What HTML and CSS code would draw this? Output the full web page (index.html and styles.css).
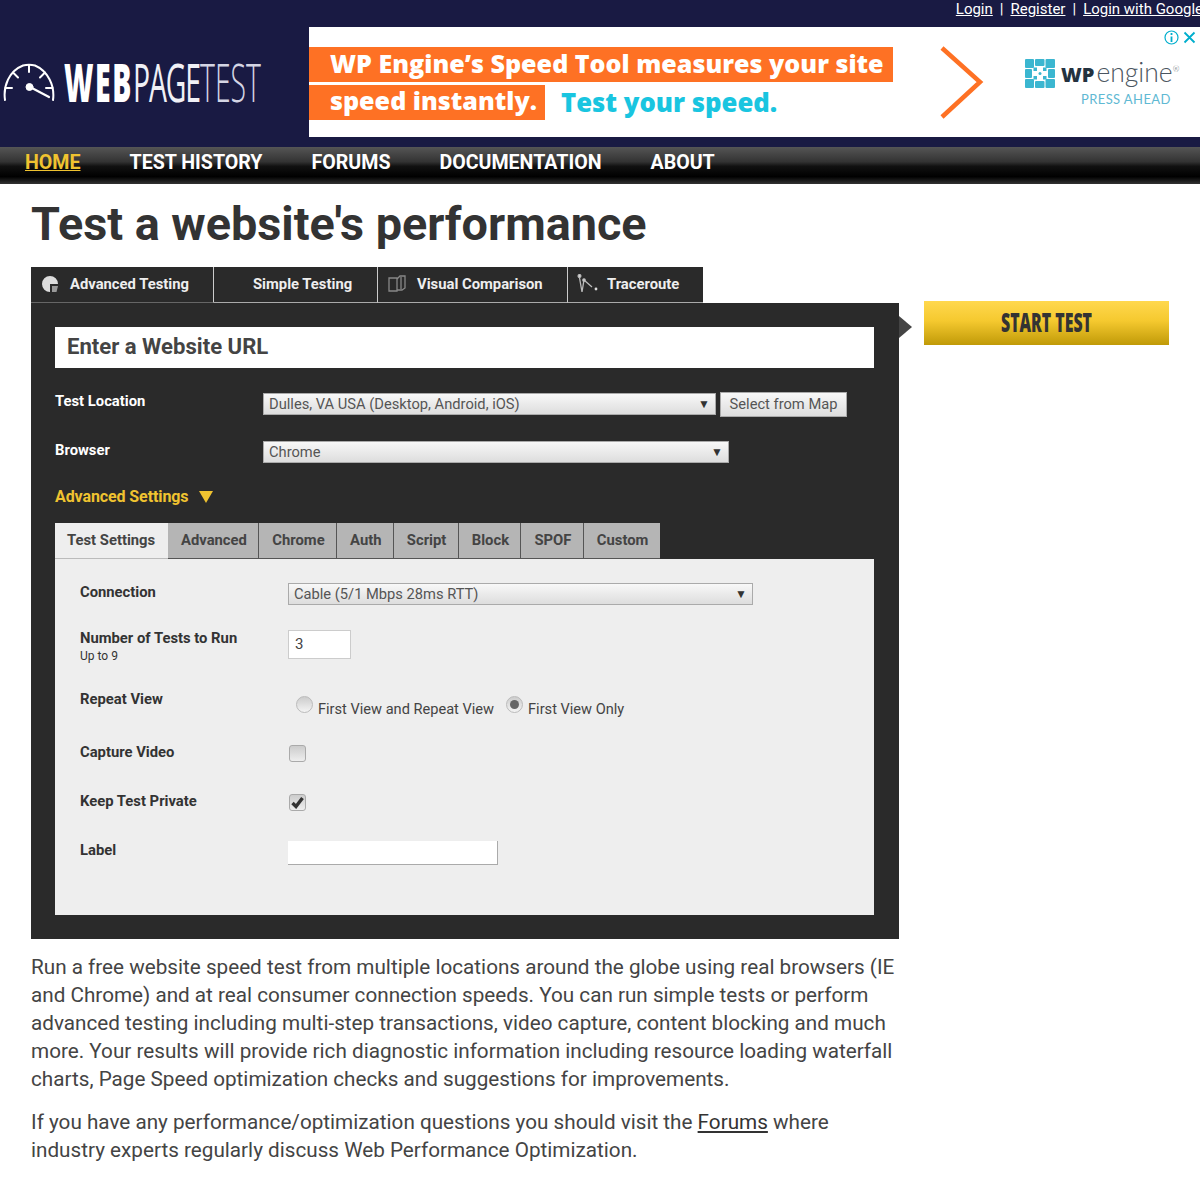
FILE: index.html
```html
<!DOCTYPE html>
<html lang="en">
  <head>
    <meta charset="UTF-8" />
    <title>WebPageTest - Website Performance and Optimization Test</title>
    <link rel="stylesheet" href="styles.css">
  </head>
  <body>
    <header class="header">
      <div class="user-links">
        <a href="#">Login</a><span>|</span><a href="#">Register</a><span>|</span><a href="#">Login with Google</a>
      </div>
      <div class="banner">
        <div class="logo">
          <svg class="gauge" width="52" height="40" viewBox="0 0 52 40" fill="none" stroke="#fff" stroke-width="2" stroke-linecap="round">
            <path d="M2 38 C0 24 6 9 20 3.500 C23.500 2.600 28.500 2.600 32 3.500 C45 9 52 24 50 38" />
            <path d="M26 3 V10 M10 10.500 L15 15.500 M42 10.500 L37 15.500 M2.500 26 H9 M49.500 26 H43" />
            <circle cx="26.500" cy="25" r="3.500" fill="#fff" stroke-width="1" />
            <path d="M27 25 L46 35" stroke-width="2.200" />
          </svg>
          <div class="logo-text"><b>WEB</b><span>PAGE</span><i>TEST</i></div>
        </div>
        <div class="ad">
          <div class="ad-copy">
            <div class="ad-line ad-line-first">WP Engine’s Speed Tool measures your site</div>
            <div class="ad-second">
              <div class="ad-line">speed instantly.</div>
              <div class="ad-cta">Test your speed.</div>
            </div>
          </div>
          <svg class="ad-arrow" width="44" height="74" viewBox="0 0 44 74" fill="none">
            <path d="M2 2 L40 36 L2 71" stroke="#fe7124" stroke-width="4.500" />
          </svg>
          <div class="ad-brand">
            <div class="ad-brand-top">
              <svg width="30" height="29" viewBox="0 0 30 29" fill="#3bb6d0">
                <rect x="0" y="0" width="9" height="9" rx="1" />
                <rect x="10" y="0" width="9.500" height="7" rx="1" />
                <rect x="20.500" y="0" width="9.500" height="9" rx="1" />
                <rect x="0" y="10" width="7" height="9" rx="1" />
                <rect x="23" y="10" width="7" height="9" rx="1" />
                <rect x="0" y="20" width="9" height="9" rx="1" />
                <rect x="10" y="22" width="9.500" height="7" rx="1" />
                <rect x="20.500" y="20" width="9.500" height="9" rx="1" />
                <rect x="8.500" y="8.500" width="3.500" height="3.500" />
                <rect x="18" y="8.500" width="3.500" height="3.500" />
                <rect x="8.500" y="17" width="3.500" height="3.500" />
                <rect x="18" y="17" width="3.500" height="3.500" />
                <circle cx="15" cy="14.500" r="1.500" />
              </svg>
              <div class="ad-brand-name"><b>WP</b>engine<sup>®</sup></div>
            </div>
            <div class="ad-tagline">PRESS AHEAD</div>
          </div>
          <div class="ad-choices">
            <svg width="15" height="15" viewBox="0 0 15 15" fill="none" stroke="#00aecd">
              <circle cx="7.500" cy="7.500" r="6.500" stroke-width="1.200" />
              <path d="M7.500 6.500 V12 M7.500 3 V5" stroke-width="1.800" />
            </svg>
            <svg width="13" height="13" viewBox="0 0 13 13" fill="none" stroke="#00aecd" stroke-width="1.800">
              <path d="M1.500 1.500 L11.500 11.500 M11.500 1.500 L1.500 11.500" />
            </svg>
          </div>
        </div>
      </div>
    </header>

    <nav class="nav">
      <a href="#" class="current">HOME</a>
      <a href="#">TEST HISTORY</a>
      <a href="#">FORUMS</a>
      <a href="#">DOCUMENTATION</a>
      <a href="#">ABOUT</a>
    </nav>

    <main class="main">
      <h1>Test a website's performance</h1>

      <div class="test-area">
        <div class="test-box">
          <ul class="test-tabs">
            <li class="active tab-advanced">
              <svg width="18" height="18" viewBox="0 0 18 18">
                <path d="M9 1 A8 8 0 1 0 9 17 V9 H17 A8 8 0 0 0 9 1 Z" fill="#ddd" />
                <path d="M11 11 H17 L15.500 17 H11 Z" fill="#999" />
              </svg>
              Advanced Testing
            </li>
            <li class="tab-simple">Simple Testing</li>
            <li class="tab-visual">
              <svg width="18" height="17" viewBox="0 0 18 17" fill="none" stroke="#888" stroke-width="1.300">
                <path d="M1 3 H9 V16 H1 Z" />
                <path d="M9 4 L12 1 H17 V13 L14 15 H9" />
                <path d="M13 2 V14" />
              </svg>
              Visual Comparison
            </li>
            <li class="tab-trace">
              <svg width="21" height="19" viewBox="0 0 21 19" fill="none" stroke="#bbb" stroke-width="1.300">
                <path d="M2 1 L5 18 L7 6 L15 13" />
                <circle cx="2.500" cy="2" r="1.400" fill="#ddd" />
                <circle cx="7" cy="6" r="1.200" fill="#ddd" />
                <circle cx="19" cy="15" r="1.400" fill="#ddd" stroke="none" />
              </svg>
              Traceroute
            </li>
          </ul>

          <div class="test-panel">
            <div class="url-box">Enter a Website URL</div>

            <div class="form-row">
              <label>Test Location</label>
              <div class="select select-location">Dulles, VA USA (Desktop, Android, iOS)<span>▼</span></div>
              <div class="map-btn">Select from Map</div>
            </div>
            <div class="form-row">
              <label>Browser</label>
              <div class="select select-browser">Chrome<span>▼</span></div>
            </div>

            <div class="adv-toggle">Advanced Settings<span></span></div>

            <ul class="sub-tabs">
              <li class="active">Test Settings</li>
              <li>Advanced</li>
              <li>Chrome</li>
              <li>Auth</li>
              <li>Script</li>
              <li>Block</li>
              <li>SPOF</li>
              <li>Custom</li>
            </ul>

            <div class="settings">
              <div class="set-row row-connection">
                <label>Connection</label>
                <div class="select select-connection">Cable (5/1 Mbps 28ms RTT)<span>▼</span></div>
              </div>
              <div class="set-row row-number">
                <label>Number of Tests to Run<small>Up to 9</small></label>
                <div class="text-input num-input">3</div>
              </div>
              <div class="set-row row-repeat">
                <label>Repeat View</label>
                <div class="radios">
                  <span class="radio"></span><span class="radio-text">First View and Repeat View</span>
                  <span class="radio checked"></span><span class="radio-text">First View Only</span>
                </div>
              </div>
              <div class="set-row row-video">
                <label>Capture Video</label>
                <span class="check"></span>
              </div>
              <div class="set-row row-private">
                <label>Keep Test Private</label>
                <span class="check">
                  <svg width="13" height="13" viewBox="0 0 13 13"><path d="M1.500 7 L5 10.500 L11.500 2" fill="none" stroke="#333" stroke-width="3.400" /></svg>
                </span>
              </div>
              <div class="set-row">
                <label>Label</label>
                <div class="text-input label-input"></div>
              </div>
            </div>
          </div>
        </div>

        <div class="start">
          <div class="start-arrow"></div>
          <div class="start-btn"><span>START TEST</span></div>
        </div>
      </div>

      <div class="about">
        <p>Run a free website speed test from multiple locations around the globe using real browsers (IE and Chrome) and at real consumer connection speeds. You can run simple tests or perform advanced testing including multi-step transactions, video capture, content blocking and much more. Your results will provide rich diagnostic information including resource loading waterfall charts, Page Speed optimization checks and suggestions for improvements.</p>
        <p>If you have any performance/optimization questions you should visit the <a href="#">Forums</a> where industry experts regularly discuss Web Performance Optimization.</p>
      </div>
    </main>
  </body>
</html>
```

FILE: styles.css
```css
* {
  margin: 0;
  padding: 0;
  box-sizing: border-box;
}
body {
  background: #fff;
  color: #333;
  font-family: Roboto, "Liberation Sans", sans-serif;
  overflow-x: hidden;
}
ul {
  list-style: none;
}

/* header */
.header {
  background: #191a43;
  height: 147px;
  overflow: hidden;
}
.user-links {
  height: 27px;
  display: flex;
  justify-content: flex-end;
  gap: 7px;
  color: #fff;
  font-size: 15px;
  line-height: 18px;
  margin-right: -3px;
  white-space: nowrap;
}
.user-links a {
  color: #fff;
}
.banner {
  display: flex;
  height: 110px;
}
.logo {
  width: 309px;
  flex: none;
  display: flex;
  align-items: flex-start;
  padding: 35px 0 0 3px;
  color: #fff;
}
.gauge {
  flex: none;
}
.logo-text {
  font-family: "Open Sans", sans-serif;
  font-size: 53px;
  line-height: 40px;
  font-weight: 400;
  margin-left: 9px;
  transform: scaleX(0.535);
  transform-origin: left center;
  white-space: nowrap;
  color: #f0f0f6;
}
.logo-text b {
  font-weight: 800;
  letter-spacing: 3px;
  color: #fff;
}
.logo-text span {
  letter-spacing: -2px;
}
.logo-text i {
  font-style: normal;
  font-weight: 300;
  color: #d4d5e4;
}

/* ad */
.ad {
  flex: 1;
  position: relative;
  background: #fff;
  display: flex;
  align-items: flex-start;
}
.ad-copy {
  width: 584px;
  flex: none;
  padding-top: 20px;
  font-family: "Open Sans", sans-serif;
  font-weight: 800;
}
.ad-line {
  background: #fe7124;
  color: #fff;
  height: 35px;
  font-size: 25.100px;
  line-height: 33px;
  padding-left: 21px;
  white-space: nowrap;
}
.ad-second {
  display: flex;
  margin-top: 3px;
}
.ad-second .ad-line {
  width: 236px;
  line-height: 31px;
}
.ad-cta {
  color: #19c5e0;
  font-size: 25.700px;
  line-height: 35px;
  margin-left: 16px;
  white-space: nowrap;
}
.ad-arrow {
  flex: none;
  margin: 19px 0 0 47px;
}
.ad-brand {
  margin: 32px 0 0 41px;
}
.ad-brand-top {
  display: flex;
  align-items: center;
  gap: 6px;
}
.ad-brand-name {
  font-family: Lato, sans-serif;
  font-weight: 300;
  font-size: 26.500px;
  line-height: 27px;
  color: #4a5560;
  white-space: nowrap;
}
.ad-brand-name b {
  font-family: "Open Sans", sans-serif;
  font-weight: 800;
  font-size: 20px;
  color: #24323f;
  margin-right: 2px;
}
.ad-brand-name sup {
  font-size: 8px;
  line-height: 0;
  vertical-align: 10px;
}
.ad-tagline {
  font-family: Lato, sans-serif;
  font-size: 13px;
  letter-spacing: 0.4px;
  color: #5fb9d3;
  margin: 3px 0 0 56px;
  white-space: nowrap;
}
.ad-choices {
  position: absolute;
  top: 3px;
  right: 4px;
  display: flex;
  align-items: center;
  gap: 4px;
}

/* main nav */
.nav {
  height: 37px;
  background: linear-gradient(#555 0%, #333 40%, #111 52%, #000 80%, #333 100%);
  display: flex;
  gap: 49px;
  padding-left: 25px;
  font-size: 19.600px;
  font-weight: 700;
  line-height: 31px;
}
.nav a {
  color: #fff;
  text-decoration: none;
}
.nav a.current {
  color: #f0c330;
  text-decoration: underline;
}

/* page */
.main {
  padding: 0 31px;
}
h1 {
  font-size: 46.800px;
  line-height: 54px;
  font-weight: 700;
  color: #333;
  padding-top: 13px;
  height: 83px;
}
.test-area {
  display: flex;
  align-items: flex-start;
}
.test-box {
  width: 868px;
  flex: none;
}

/* test type tabs */
.test-tabs {
  display: flex;
  height: 36px;
  font-size: 14.800px;
  font-weight: 700;
  color: #eee;
}
.test-tabs li {
  background: #2a2a2a;
  height: 36px;
  padding-bottom: 2px;
  display: flex;
  align-items: center;
  border-right: 1px solid #ccc;
  border-bottom: 1px solid #aaa;
}
.test-tabs li svg {
  flex: none;
}
.tab-advanced {
  width: 183px;
  padding-left: 10px;
  gap: 11px;
  border-bottom-color: #666 !important;
}
.tab-simple {
  width: 164px;
  padding-left: 39px;
}
.tab-visual {
  width: 190px;
  padding-left: 10px;
  gap: 11px;
}
.tab-trace {
  width: 135px;
  padding-left: 9px;
  gap: 9px;
  border-right: 0 !important;
}
.test-panel {
  background: #2a2a2a;
  padding: 24px 25px 24px 24px;
  height: 636px;
}
.url-box {
  background: #fff;
  height: 41px;
  font-size: 22.100px;
  font-weight: 700;
  line-height: 39px;
  padding-left: 12px;
  color: #444;
  margin-bottom: 24px;
}
.form-row {
  display: flex;
  align-items: flex-start;
  height: 25px;
  margin-bottom: 24px;
}
.form-row label {
  width: 208px;
  flex: none;
  color: #fff;
  font-size: 14.800px;
  font-weight: 700;
  line-height: 18px;
}
.select {
  height: 22px;
  border: 1px solid #aaa;
  background: linear-gradient(#f8f8f8, #ddd);
  display: flex;
  justify-content: space-between;
  align-items: center;
  padding: 0 5px;
  font-size: 14.700px;
  color: #555;
}
.select span {
  font-size: 12px;
  color: #333;
}
.select-location {
  width: 453px;
  margin-top: 1px;
}
.select-browser {
  width: 466px;
}
.select-connection {
  width: 465px;
}
.map-btn {
  margin-left: 4px;
  width: 127px;
  height: 25px;
  border: 1px solid #aaa;
  background: linear-gradient(#f8f8f8, #ddd);
  font-size: 14.700px;
  line-height: 22px;
  text-align: center;
  color: #555;
}
.adv-toggle {
  display: flex;
  color: #f0c330;
  font-size: 16px;
  font-weight: 700;
  letter-spacing: -0.1px;
  line-height: 20px;
  height: 36px;
  margin-top: -3px;
}
.adv-toggle span {
  width: 0;
  height: 0;
  margin: 4px 0 0 11px;
  border-top: 12px solid #f0c330;
  border-left: 7px solid transparent;
  border-right: 7px solid transparent;
}

/* settings sub tabs */
.sub-tabs {
  display: flex;
  height: 36px;
  font-size: 14.800px;
  font-weight: 700;
  line-height: 34px;
}
.sub-tabs li {
  background: #b5b5b5;
  color: #444;
  padding: 0 11.400px 0 13px;
  border-right: 1px solid #555;
  border-bottom: 1px solid #555;
}
.sub-tabs li:last-child {
  border-right: 0;
}
.sub-tabs li.active {
  background: #eee;
  border-right: 0;
  border-bottom: 1px solid #bbb;
  width: 113px;
  padding: 0 0 0 12px;
}
.settings {
  background: #eee;
  height: 356px;
  padding: 24px 24px 0 25px;
}
.set-row {
  display: flex;
  align-items: flex-start;
  padding-bottom: 24px;
}
.set-row label {
  width: 208px;
  flex: none;
  font-size: 14.800px;
  font-weight: 700;
  line-height: 18px;
  color: #333;
}
.set-row small {
  display: block;
  font-size: 12px;
  font-weight: 400;
  line-height: 18px;
}
.row-number {
  padding-bottom: 25px;
}
.row-repeat {
  padding-bottom: 25px;
}
.row-video,
.row-private {
  padding-bottom: 30px;
}
.text-input {
  background: #fff;
  border: 1px solid #ccc;
  font-size: 15px;
  color: #444;
  padding-left: 6px;
}
.num-input {
  width: 63px;
  height: 29px;
  line-height: 26px;
  margin-top: 1px;
}
.label-input {
  width: 210px;
  height: 24px;
  border-width: 0 1px 1px 0;
  border-color: #aaa;
}
.radios {
  display: flex;
  align-items: flex-start;
  padding: 6px 0 0 8px;
  font-size: 14.600px;
  color: #444;
}
.radio {
  width: 17px;
  height: 17px;
  border-radius: 50%;
  border: 1px solid #bbb;
  background: linear-gradient(#ccc, #f4f4f4);
  margin-right: 5px;
  flex: none;
  position: relative;
}
.radio.checked::after {
  content: "";
  position: absolute;
  left: 3px;
  top: 3px;
  width: 9px;
  height: 9px;
  border-radius: 50%;
  background: #666;
}
.radio-text {
  margin: 4px 12px 0 0;
}
.check {
  width: 17px;
  height: 17px;
  margin: 2px 0 0 1px;
  border: 1px solid #aaa;
  border-radius: 3px;
  background: linear-gradient(#ccc, #eee);
  display: flex;
  align-items: center;
  justify-content: center;
}

/* start button */
.start {
  display: flex;
  align-items: flex-start;
  margin-top: 34px;
}
.start-arrow {
  width: 0;
  height: 0;
  margin-top: 15px;
  border-left: 13px solid #444;
  border-top: 11px solid transparent;
  border-bottom: 11px solid transparent;
}
.start-btn {
  width: 245px;
  height: 44px;
  margin-left: 12px;
  background: linear-gradient(#ffd84e 0%, #f5c92f 45%, #c09a08 100%);
  color: #333;
  font-family: "Open Sans", sans-serif;
  font-weight: 800;
  font-size: 26px;
  line-height: 43px;
  text-align: center;
  white-space: nowrap;
}
.start-btn span {
  display: inline-block;
  transform: scaleX(0.61);
}

/* about */
.about {
  width: 868px;
  padding-top: 14px;
  font-size: 20.700px;
  line-height: 28px;
  color: #444;
}
.about p {
  margin-bottom: 15px;
}
.about a {
  color: #333;
}
```
